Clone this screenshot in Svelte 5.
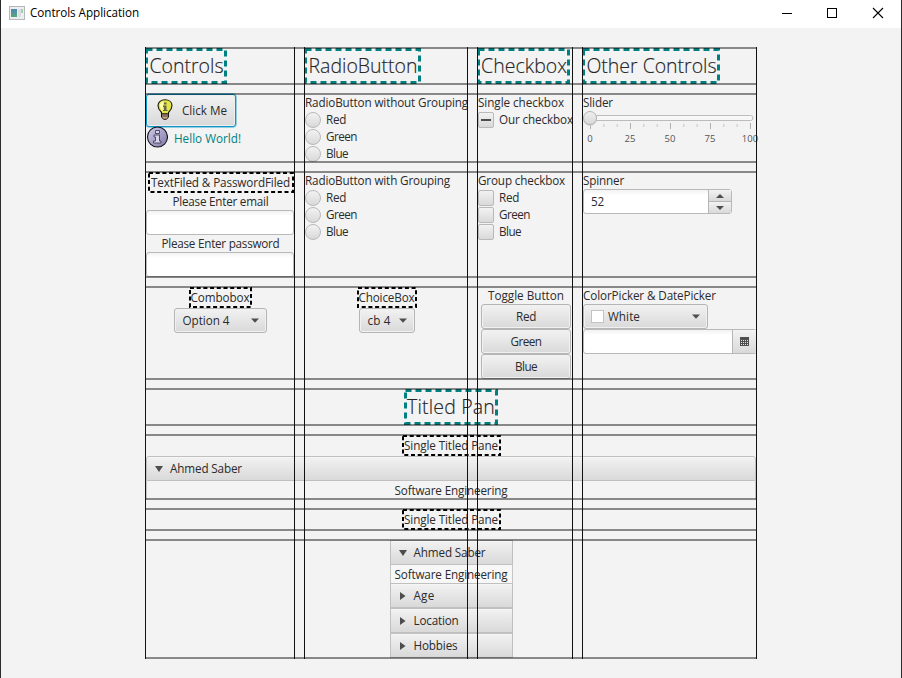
<script>
  const colors = ['Red', 'Green', 'Blue'];
  const nameWidths = { Red: 20, Green: 31, Blue: 22 };
  const vLines = [0, 149, 159, 322, 332, 427, 437, 611];
  const hLines = [0, 36, 46, 114, 124, 229, 239, 331, 341, 377, 387, 451, 461, 482, 492, 610];
  const ticks = Array.from({ length: 13 }, (_, i) => ({ x: 7.5 + i * 13.33, major: i % 3 === 0 }));
  const sections = [
    { name: 'Age', width: 21 },
    { name: 'Location', width: 45 },
    { name: 'Hobbies', width: 44 }
  ];

  // Spreads the letters so that a label occupies the given width.
  function fit(node, width) {
    const natural = node.getBoundingClientRect().width;
    node.style.letterSpacing = (width - natural) / node.textContent.length + 'px';
  }
</script>

{#snippet label(text, width)}<span class="t" use:fit={width}>{text}</span>{/snippet}

{#snippet heading(text, width, box)}
  <div class="heading" style:width="{box}px">
    <svg class="frame" width={box} height="36"><rect x="1.5" y="1.5" width={box - 3} height="33" fill="none" stroke="#008080" stroke-width="3" stroke-dasharray="6 4" /></svg>
    {@render label(text, width)}
  </div>
{/snippet}

{#snippet caption(text, width, box)}
  <div class="caption" style:width="{box}px">
    <svg class="frame" width={box} height="21"><rect x="1" y="1" width={box - 2} height="19" fill="none" stroke="#000" stroke-width="2" stroke-dasharray="4 2.7" /></svg>
    {@render label(text, width)}
  </div>
{/snippet}

{#snippet arrow()}<svg class="arrow" width="8" height="5"><path d="M0 0.5H8L4 4.7Z" fill="#4d4d4d" /></svg>{/snippet}

<div class="window">
  <header>
    <svg width="16" height="14" viewBox="0 0 16 14">
      <defs><linearGradient id="screen" x2="0" y2="1"><stop stop-color="#4d86b8" /><stop offset="1" stop-color="#56a874" /></linearGradient></defs>
      <rect x=".5" y=".5" width="15" height="13" fill="#eceef0" stroke="#b3b8bd" />
      <rect x="2" y="3" width="6" height="8" fill="url(#screen)" />
      <rect x="9" y="3" width="3" height="8" fill="#dcdfe2" />
      <rect x="12" y="3" width="2" height="4" fill="#a5cfae" />
    </svg>
    <span class="title">{@render label('Controls Application', 109)}</span>
    <svg class="winbtns" width="102" height="12" shape-rendering="crispEdges" fill="none" stroke="#000">
      <path d="M0 6.5H10" /><rect x="45.5" y="1.5" width="9" height="9" />
      <path d="M91 1L101 11M101 1L91 11" shape-rendering="auto" stroke-width="1.1" />
    </svg>
  </header>

  <main>
    <div class="cell title-cell">{@render heading('Controls', 75, 82)}</div>
    <div class="cell title-cell">{@render heading('RadioButton', 110, 117)}</div>
    <div class="cell title-cell">{@render heading('Checkbox', 87, 93)}</div>
    <div class="cell title-cell">{@render heading('Other Controls', 131, 138)}</div>

    <div class="cell">
      <button class="btn click">
        <svg width="16" height="21" viewBox="0 0 16 21">
          <path d="M4.5 13.5C2.5 11.5 1 9.500 1 6.500C1 3 4 .8 8 .8S15 3 15 6.500C15 9.500 13.500 11.500 11.500 13.500V15H4.500Z" fill="#e5e545" stroke="#17170c" stroke-width="1.1" />
          <path d="M3 7C3 4 4.500 2.500 6.500 2.300L5.500 12.500Q3.500 10 3 7Z" fill="#ffffb5" />
          <path d="M7 3.500H9.500V5.500H7ZM6 6.500H9.500V11H10.500V12H6V11H7V8H6Z" fill="#66664a" />
          <path d="M4.500 15H11.500V18L9.500 20.300H6.500L4.500 18Z" fill="#c9a58a" stroke="#1d1713" />
          <path d="M5 17H11" stroke="#493f37" />
        </svg>
        {@render label('Click Me', 45)}
      </button>
      <div class="hello">
        <svg width="22" height="22" viewBox="0 0 22 22">
          <defs><linearGradient id="inf" x2="1" y2="1"><stop stop-color="#d2cdec" /><stop offset="1" stop-color="#8178a5" /></linearGradient></defs>
          <circle cx="11.5" cy="11" r="10" fill="url(#inf)" stroke="#15131d" stroke-width="1.1" />
          <path d="M9.500 4.500H13.500V7.500H9.500ZM8 9H13.500V15H15V17H7.500V15H9.500V11H8Z" fill="#d9d4eb" stroke="#39334c" stroke-width=".8" />
        </svg>
        {@render label('Hello World!', 67)}
      </div>
    </div>
    <div class="cell">
      <div class="line">{@render label('RadioButton without Grouping', 163)}</div>
      {#each colors as c}<div class="line option"><i class="radio"></i>{@render label(c, nameWidths[c])}</div>{/each}
    </div>
    <div class="cell">
      <div class="line">{@render label('Single checkbox', 86)}</div>
      <div class="line option"><i class="check"><b></b></i>{@render label('Our checkbox', 74)}</div>
    </div>
    <div class="cell">
      <div class="line">{@render label('Slider', 30)}</div>
      <svg class="slider" width="180" height="40">
        <defs><linearGradient id="knob" x2="0" y2="1"><stop stop-color="#f0f0f0" /><stop offset="1" stop-color="#d8d8d8" /></linearGradient></defs>
        <rect x="3" y="4.500" width="167" height="5" rx="2.500" fill="#f7f7f7" stroke="#bcbcbc" />
        {#each ticks as k}<path d="M{k.x} {k.major ? 12 : 13}v{k.major ? 6 : 3}" stroke={k.major ? '#b0b0b0' : '#c6c6c6'} />{/each}
        <circle cx="7" cy="8" r="7" fill="#ccc" opacity=".6" />
        <circle cx="7" cy="7" r="6.500" fill="url(#knob)" stroke="#b2b2b2" />
        {#each [0, 25, 50, 75, 100] as n, i}<text x={7 + i * 40} y="31">{n}</text>{/each}
      </svg>
    </div>

    <div class="cell center entry">
      {@render caption('TextFiled & PasswordFiled', 139, 146)}
      <div class="line">{@render label('Please Enter email', 96)}</div>
      <div class="field"></div>
      <div class="line">{@render label('Please Enter password', 118)}</div>
      <div class="field"></div>
    </div>
    <div class="cell">
      <div class="line">{@render label('RadioButton with Grouping', 145)}</div>
      {#each colors as c}<div class="line option"><i class="radio"></i>{@render label(c, nameWidths[c])}</div>{/each}
    </div>
    <div class="cell">
      <div class="line">{@render label('Group checkbox', 87)}</div>
      {#each colors as c}<div class="line option"><i class="check"></i>{@render label(c, nameWidths[c])}</div>{/each}
    </div>
    <div class="cell">
      <div class="line">{@render label('Spinner', 41)}</div>
      <div class="spinner">
        <div class="value">{@render label('52', 13)}</div>
        <div class="steps">
          <span><svg width="8" height="4"><path d="M0 4H8L4 0Z" fill="#4d4d4d" /></svg></span>
          <span><svg width="8" height="4"><path d="M0 0H8L4 4Z" fill="#4d4d4d" /></svg></span>
        </div>
      </div>
    </div>

    <div class="cell center">
      {@render caption('Combobox', 59, 63)}
      <div class="btn combo" style:width="93px">{@render label('Option 4', 47)}{@render arrow()}</div>
    </div>
    <div class="cell center choice">
      {@render caption('ChoiceBox', 56, 60)}
      <div class="btn combo" style:width="56px">{@render label('cb 4', 23)}{@render arrow()}</div>
    </div>
    <div class="cell center toggles">
      <div class="line">{@render label('Toggle Button', 76)}</div>
      {#each colors as c}<button class="btn toggle">{@render label(c, nameWidths[c])}</button>{/each}
    </div>
    <div class="cell">
      <div class="line">{@render label('ColorPicker & DatePicker', 133)}</div>
      <div class="btn combo picker" style:width="125px"><i class="swatch"></i>{@render label('White', 32)}{@render arrow()}</div>
      <div class="date">
        <div class="value"></div>
        <div class="cal">
          <svg width="9" height="9" shape-rendering="crispEdges">
            <rect width="9" height="9" fill="#4d4d4d" />
            <path d="M1 3.500H8M1 5.500H8M1 7.500H8" stroke="#e4e4e4" stroke-dasharray="1 1" />
          </svg>
        </div>
      </div>
    </div>

    <div class="cell wide center">{@render heading('Titled Pan', 88, 94)}</div>

    <div class="cell wide center">
      {@render caption('Single Titled Pane', 94, 99)}
      <div class="pane">
        <div class="head"><svg width="8" height="6"><path d="M0 0H8L4 6Z" fill="#4d4d4d" /></svg>{@render label('Ahmed Saber', 72)}</div>
        <div class="body">{@render label('Software Engineering', 113)}</div>
      </div>
    </div>

    <div class="cell wide center">{@render caption('Single Titled Pane', 94, 99)}</div>

    <div class="cell wide center">
      <div class="accordion">
        <div class="head"><svg width="8" height="6"><path d="M0 0H8L4 6Z" fill="#4d4d4d" /></svg>{@render label('Ahmed Saber', 72)}</div>
        <div class="body">{@render label('Software Engineering', 113)}</div>
        {#each sections as s}
          <div class="head"><svg width="8" height="8"><path d="M1 0V8L6.500 4Z" fill="#4d4d4d" /></svg>{@render label(s.name, s.width)}</div>
        {/each}
      </div>
    </div>

    <svg class="grid" width="613" height="612">
      {#each hLines as y}<rect x="0" {y} width="612" height="2" fill="#000" opacity=".44" />{/each}
      {#each vLines as x}<rect {x} y="0" width="1" height="612" fill="#111" />{/each}
    </svg>
  </main>
</div>

<style>
  :global(body) { margin: 0; }
  .window {
    box-sizing: border-box; width: 902px; height: 678px; overflow: hidden;
    background: #f3f3f3; border: solid #2b2b2b; border-width: 0 1px;
    font: 11.7px/17px "Open Sans", "Noto Sans", sans-serif; color: #2b2b2b;
  }
  header { display: flex; align-items: center; height: 28px; box-sizing: border-box; padding: 0 17px 3px 8px; background: #fff; color: #000; }
  .title { margin-left: 5px; }
  .winbtns { margin-left: auto; }
  .t { white-space: nowrap; display: inline-block; }
  main {
    position: relative; margin: 20px 0 0 144px; width: 611px; display: grid;
    grid-template-columns: 149px 163px 95px 174px;
    grid-template-rows: 36px 68px 105px 92px 36px 64px 21px 118px;
    gap: 10px;
  }
  .cell { min-width: 0; display: flex; flex-direction: column; align-items: flex-start; padding-left: 1px; }
  .title-cell { padding-left: 0; }
  .title-cell .t { padding-left: 1px; }
  .center { align-items: center; }
  .entry, .choice { padding-left: 2px; }
  .wide { grid-column: 1 / -1; }
  .heading, .caption { position: relative; flex: none; display: flex; justify-content: center; }
  .heading { height: 36px; font-size: 19.5px; font-weight: 300; line-height: 35px; color: #222; -webkit-text-stroke: .15px #333; }
  .caption { height: 21px; line-height: 21px; }
  .frame { position: absolute; inset: 0; }
  .line { height: 17px; display: flex; align-items: center; flex: none; }
  .option { gap: 5px; }
  .btn, .head, .steps span, .cal, .check, .radio { background: linear-gradient(#f2f2f2, #d9d9d9); box-sizing: border-box; }
  .btn { border: 1px solid #b5b5b5; border-radius: 3px; box-shadow: inset 0 0 0 1px #f1f1f1; padding: 0; font: inherit; color: inherit; display: flex; align-items: center; height: 25px; flex: none; }
  .click { width: 90px; height: 33px; border: 1px solid #0f96c4; box-shadow: 0 0 0 .5px #32a9d2, inset 0 0 0 1px #eee; padding: 0 8px 0 10px; gap: 9px; }
  .click svg { margin-top: -3px; }
  .hello { display: flex; align-items: center; gap: 6px; height: 22px; color: #008080; }
  .hello svg { margin-top: -2px; }
  .radio, .check { display: flex; align-items: center; justify-content: center; width: 16px; height: 16px; border: 1px solid #b9b9b9; }
  .radio { border-radius: 50%; }
  .check { border-radius: 2px; }
  .check b { width: 10px; height: 2px; background: #4d4d4d; }
  .slider { overflow: visible; flex: none; }
  .slider text { font-size: 9.500px; fill: #555; text-anchor: middle; }
  .field { box-sizing: border-box; width: 148px; height: 25px; flex: none; }
  .entry .field { margin-left: -1px; }
  .field, .spinner, .date { background: linear-gradient(#f2f2f2, #fff 5px); border: 1px solid #b9b9b9; border-radius: 3px; }
  .spinner, .date { box-sizing: border-box; height: 25px; display: flex; flex: none; }
  .spinner { width: 149px; }
  .date { width: 174px; }
  .value { flex: 1; padding: 3px 0 0 7px; }
  .steps { width: 23px; display: flex; flex-direction: column; border-left: 1px solid #b5b5b5; box-sizing: border-box; }
  .steps span { flex: 1; display: flex; align-items: center; justify-content: center; }
  .steps span + span { border-top: 1px solid #b5b5b5; }
  .cal { width: 24px; display: flex; align-items: center; justify-content: center; border-left: 1px solid #b5b5b5; }
  .combo { padding: 0 7px 0 8px; }
  .picker { padding-left: 7px; }
  .arrow { margin-left: auto; }
  .swatch { width: 13px; height: 13px; box-sizing: border-box; background: #fff; border: 1px solid #c4c4c4; margin-right: 4px; }
  .toggles { padding-left: 3px; }
  .toggle { width: 90px; justify-content: center; }
  .pane { width: 610px; }
  .head { height: 25px; display: flex; align-items: center; gap: 7px; padding-left: 8px; border: 1px solid #c0c0c0; box-shadow: inset 0 1px #f6f6f6; }
  .pane .head { border-radius: 3px 3px 0 0; }
  .body { height: 18px; line-height: 16px; box-sizing: border-box; display: flex; align-items: center; justify-content: center; border: solid #c6c6c6; border-width: 0 1px; background: #f4f4f4; }
  .accordion { width: 123px; }
  .accordion .body { background: #f7f7f7; }
  .grid { position: absolute; left: 0; top: -1px; pointer-events: none; }
</style>
